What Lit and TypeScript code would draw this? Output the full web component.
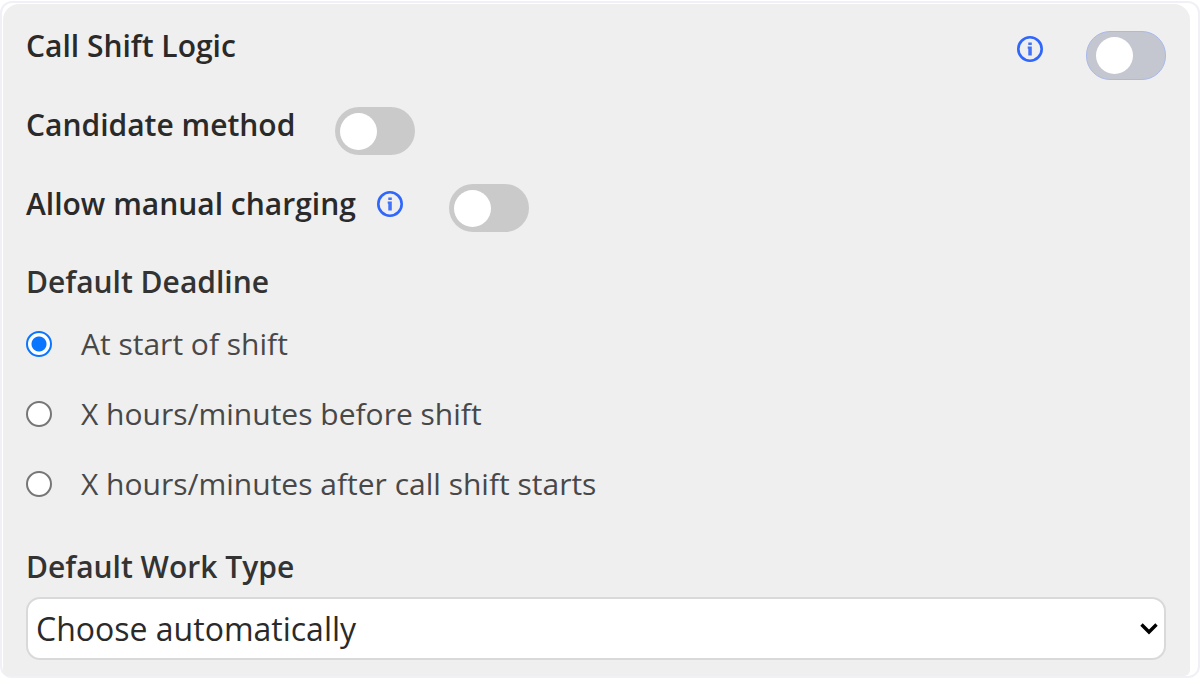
import { LitElement, html, css, svg } from "lit";
import { customElement, property, state } from "lit/decorators.js";

@customElement("info-button")
class InfoButton extends LitElement {
  @property() label = "";

  static styles = css`
    :host { display: block; }
    .info {
      display: block;
      padding: 0;
      border: 0;
      background: none;
      cursor: pointer;
    }
    svg { display: block; width: 28px; height: 28px; }
  `;

  render() {
    return html`<button class="info" type="button" aria-label=${this.label}>
      <svg viewBox="0 0 28 28" aria-hidden="true">${svg`
        <circle cx="14" cy="14" r="11.7" fill="none" stroke="#2f66fb" stroke-width="2.6" />
        <path d="M12.3 7.4h3.5v2.6h-3.500zM11.700 11.600h4.100v8.800h-3.500v-6.600h-.6z" fill="#4172f8" />`}
      </svg>
    </button>`;
  }
}

@customElement("app-root")
class AppRoot extends LitElement {
  @state() private deadline = "start";

  static styles = css`
    :host {
      display: block;
      padding-top: 1px;
      font-family: "Open Sans", "Noto Sans", sans-serif;
      font-size: 30px;
      color: #2a2a2a;
    }
    * { box-sizing: border-box; }
    .frame {
      border: 2px solid #f0f0f6;
      border-radius: 12px;
      padding: 1px 8px 0 1px;
      background: #fff;
    }
    .panel {
      background: #efefef;
      border-radius: 16px 16px 6px 6px;
      padding: 27px 24px 16px 23px;
    }
    .row {
      display: flex;
      align-items: flex-start;
    }
    .name, .heading {
      margin: 0;
      font-weight: 600;
      line-height: 32px;
    }
    .heading { color: #333; }
    .logic { justify-content: space-between; }
    .logic .name { line-height: 30px; }
    .side { display: flex; gap: 42px; }
    .side info-button { padding-top: 4px; }
    .candidate { margin-top: 27px; gap: 40px; }
    .manual { margin-top: 29px; gap: 45px; }
    .candidate .name { line-height: 36px; }
    .manual .name { line-height: 40px; }
    .titled { display: flex; gap: 20px; }
    .titled info-button { padding-top: 6px; }
    .toggle {
      appearance: none;
      display: flex;
      align-items: center;
      flex: none;
      width: 80px;
      height: 48px;
      margin: 0;
      padding: 0 5px;
      border-radius: 24px;
      background: #cacaca;
      cursor: pointer;
    }
    .toggle::before {
      content: "";
      width: 37px;
      height: 37px;
      border-radius: 50%;
      background: #fff;
    }
    .toggle:checked { justify-content: flex-end; background: #2f66fb; }
    .outlined {
      height: 49px;
      padding: 0 9px;
      border: 1px solid #a9b9ec;
      background: #c4c7d0;
    }
    fieldset { margin: 0; padding: 0; border: 0; min-width: 0; }
    .deadline { margin-top: 34px; }
    legend { padding: 0; }
    .choices { display: grid; gap: 30px; padding-top: 26px; }
    .choice {
      display: flex;
      align-items: center;
      gap: 29px;
      line-height: 40px;
      color: #484848;
    }
    .radio {
      appearance: none;
      flex: none;
      width: 26px;
      height: 26px;
      margin: 0;
      border: 2px solid #767676;
      border-radius: 50%;
      background: #fff;
    }
    .radio:checked {
      border-color: #0a75ff;
      background: radial-gradient(circle, #0a75ff 7px, #fff 8px);
    }
    .type { display: block; margin-top: 47px; }
    .picker { position: relative; margin-top: 14px; }
    select {
      appearance: none;
      display: block;
      width: 100%;
      height: 63px;
      padding: 0 40px 0 8px;
      border: 2px solid #d9d9d9;
      border-radius: 14px;
      background: #fff;
      font: inherit;
      font-size: 32px;
      color: #2a2a2a;
    }
    .chevron {
      position: absolute;
      right: 8px;
      top: 26px;
      width: 18px;
      height: 12px;
      pointer-events: none;
    }
  `;

  private choice(value: string, text: string) {
    return html`<label class="choice">
      <input class="radio" type="radio" name="deadline" value=${value}
        .checked=${this.deadline === value}
        @change=${() => (this.deadline = value)} />
      <span>${text}</span>
    </label>`;
  }

  render() {
    return html`<main class="frame">
      <form class="panel">
        <div class="row logic">
          <label class="name" for="logic">Call Shift Logic</label>
          <div class="side">
            <info-button label="About call shift logic"></info-button>
            <input class="toggle outlined" id="logic" type="checkbox" role="switch" />
          </div>
        </div>
        <div class="row candidate">
          <label class="name" for="candidate">Candidate method</label>
          <input class="toggle" id="candidate" type="checkbox" role="switch" />
        </div>
        <div class="row manual">
          <div class="titled">
            <label class="name" for="manual">Allow manual charging</label>
            <info-button label="About manual charging"></info-button>
          </div>
          <input class="toggle" id="manual" type="checkbox" role="switch" />
        </div>
        <fieldset class="deadline">
          <legend class="heading">Default Deadline</legend>
          <div class="choices">
            ${this.choice("start", "At start of shift")}
            ${this.choice("before", "X hours/minutes before shift")}
            ${this.choice("after", "X hours/minutes after call shift starts")}
          </div>
        </fieldset>
        <label class="heading type" for="type">Default Work Type</label>
        <div class="picker">
          <select id="type"><option>Choose automatically</option></select>
          <svg class="chevron" viewBox="0 0 18 12" aria-hidden="true">
            <path d="M1.500 1.500L9 9L16.500 1.500" fill="none" stroke="#000" stroke-width="3.4" />
          </svg>
        </div>
      </form>
    </main>`;
  }
}
